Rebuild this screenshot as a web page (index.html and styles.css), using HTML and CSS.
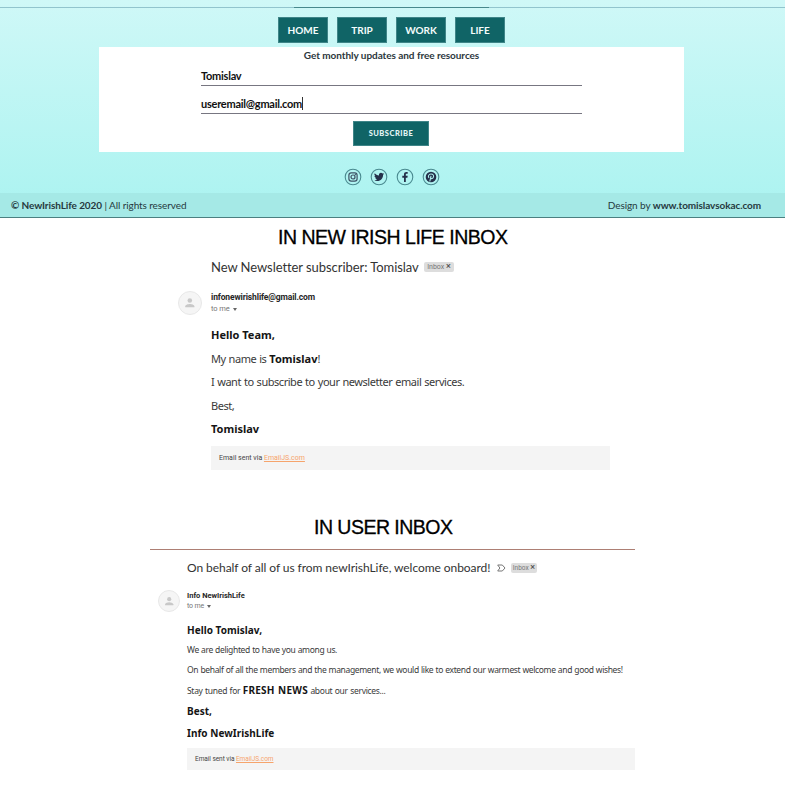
FILE: index.html
```
<!DOCTYPE html>
<html lang="en">
<head>
<meta charset="utf-8">
<title>NewIrishLife newsletter</title>
<link rel="stylesheet" href="styles.css">
</head>
<body>
<footer class="site">
  <div class="rule"><div class="rule-accent"></div></div>
  <nav class="nav"><a>HOME</a><a>TRIP</a><a>WORK</a><a>LIFE</a></nav>
  <form class="signup">
    <h2><span>Get monthly updates and free resources</span></h2>
    <div class="field"><span>Tomislav</span></div>
    <div class="field second"><span>useremail@gmail.com</span><i class="caret"></i></div>
    <button type="button">SUBSCRIBE</button>
  </form>
  <div class="social">
    <svg viewBox="0 0 18 18"><circle class="ring" cx="9" cy="9" r="7.8"/><rect class="line" x="4.9" y="4.9" width="8.2" height="8.2" rx="2.3"/><circle class="line" cx="9" cy="9" r="2"/><circle cx="11.3" cy="6.7" r=".6"/></svg>
    <svg viewBox="0 0 18 18"><circle class="ring" cx="9" cy="9" r="7.8"/><path transform="translate(4 3.9) scale(.42)" d="M23.95 4.57a10 10 0 0 1-2.82.77 4.96 4.96 0 0 0 2.16-2.72c-.95.55-2 .95-3.13 1.18a4.92 4.92 0 0 0-8.38 4.48C7.69 8.1 4.07 6.13 1.64 3.16a4.92 4.92 0 0 0 1.52 6.57 4.9 4.9 0 0 1-2.23-.61v.06a4.92 4.92 0 0 0 3.95 4.83 5 5 0 0 1-2.21.08 4.94 4.94 0 0 0 4.6 3.42A9.87 9.87 0 0 1 0 19.54a13.99 13.99 0 0 0 7.56 2.21c9.05 0 14-7.5 14-13.98v-.64a9.94 9.94 0 0 0 2.39-2.56z"/></svg>
    <svg viewBox="0 0 18 18"><circle class="ring" cx="9" cy="9" r="7.8"/><path d="M8 14V9.7H6.3V7.8H8V6.3C8 4.7 9 3.9 10.4 3.9l1.3.1v1.7h-.9c-.8 0-1 .4-1 1v1.1h1.9l-.3 1.9H9.8V14z"/></svg>
    <svg viewBox="0 0 18 18"><circle class="ring" cx="9" cy="9" r="7.8"/><circle cx="9" cy="9" r="5.3"/><path class="pin" d="M7 10c-1.3-1.7-.3-4 2-4 2.100 0 3 1.500 2.400 3.200-.5 1.600-2.200 1.800-2.600.8M9 7.800l-1.200 5.700"/></svg>
  </div>
  <div class="legal"><div class="left"><b>© NewIrishLife 2020</b> | All rights reserved</div><div class="right">Design by <b>www.tomislavsokac.com</b></div></div>
</footer>

<h1 class="heading team-heading">IN NEW IRISH LIFE INBOX</h1>
<section class="mail team">
  <div class="subject"><span class="title">New Newsletter subscriber: Tomislav</span><span class="tag">Inbox <b>×</b></span></div>
  <div class="sender">
    <div class="avatar"><svg viewBox="0 0 24 24"><circle cx="12" cy="8" r="4"/><path d="M4 20v-2c0-2.700 5.300-4 8-4s8 1.300 8 4v2z"/></svg></div>
    <div><div class="from">infonewirishlife@gmail.com</div><div class="to">to me <i></i></div></div>
  </div>
  <div class="body">
    <p class="strong hello">Hello Team,</p>
    <p class="name">My name is <b>Tomislav</b>!</p>
    <p class="want">I want to subscribe to your newsletter email services.</p>
    <p>Best,</p>
    <p class="strong">Tomislav</p>
  </div>
  <div class="via">Email sent via <u>EmailJS.com</u></div>
</section>

<h1 class="heading user-heading">IN USER INBOX</h1>
<section class="mail user">
  <div class="subject"><span class="title">On behalf of all of us from newIrishLife, welcome onboard!</span><svg class="marker" viewBox="0 0 9 8"><path d="M.7 1h4.600L8 4 5.300 7H.7l2.200-3z"/></svg><span class="tag">Inbox <b>×</b></span></div>
  <div class="sender">
    <div class="avatar"><svg viewBox="0 0 24 24"><circle cx="12" cy="8" r="4"/><path d="M4 20v-2c0-2.700 5.300-4 8-4s8 1.300 8 4v2z"/></svg></div>
    <div><div class="from">Info NewIrishLife</div><div class="to">to me <i></i></div></div>
  </div>
  <div class="body">
    <p class="strong hello">Hello Tomislav,</p>
    <p class="delight">We are delighted to have you among us.</p>
    <p class="behalf">On behalf of all the members and the management, we would like to extend our warmest welcome and good wishes!</p>
    <p class="stay">Stay tuned for <b>FRESH NEWS</b> about our services...</p>
    <p class="strong best">Best,</p>
    <p class="strong sign">Info NewIrishLife</p>
  </div>
  <div class="via">Email sent via <u>EmailJS.com</u></div>
</section>
</body>
</html>
```
FILE: styles.css
```
* { box-sizing: border-box; }
body { margin: 0; height: 785px; overflow: hidden; background: #fff; color: #222; font-family: "Noto Sans", sans-serif; }
h1, h2, p { margin: 0; }
div, p, h1, h2, span { white-space: nowrap; }

.site { height: 218px; padding-top: 7px; background: linear-gradient(#cff8f7, #aaf3f0); border-bottom: 1px solid #4b7f80; font-family: Lato, sans-serif; color: #263940; }
.rule { height: 1px; background: #91c4cd; }
.rule-accent { width: 195px; height: 1px; margin-left: 294px; background: #47888c; }
.nav { display: flex; gap: 9px; margin: 9px 0 0 278px; height: 26px; }
.nav a { width: 50px; border: 1px solid #3f8588; background: #106466; color: #f4fcfc; font-weight: 700; font-size: 10px; line-height: 24px; text-align: center; }
.signup { width: 585px; height: 105px; margin: 4px 0 0 99px; background: #fff; display: flex; flex-direction: column; align-items: center; }
.signup h2 { height: 18px; font-size: 10px; line-height: 17px; letter-spacing: -.05px; color: #2c373d; }
.field { width: 381px; height: 21px; border-bottom: 1px solid #777681; display: flex; align-items: center; font-weight: 700; font-size: 11px; letter-spacing: -.25px; color: #111; }
.second { height: 28px; padding-top: 8px; }
.caret { width: 1px; height: 13px; background: #333; }
.signup button { width: 76px; height: 25px; margin: 7px 1px 0 0; padding: 0; border: 1px solid #3f8588; background: #106466; color: #e5f6f6; font: 900 7.5px/22px Lato, sans-serif; letter-spacing: .5px; }
.social { display: flex; gap: 8px; margin: 16px 0 0 344px; height: 18px; }
.social svg { width: 18px; height: 18px; fill: #25304a; }
.social .ring { fill: none; stroke: #4a8a90; stroke-width: 1.1; }
.social .line { fill: none; stroke: #3d5265; stroke-width: 1.2; }
.social .pin { fill: none; stroke: #adeeed; stroke-width: 1.1; }
.legal { display: flex; justify-content: space-between; height: 24px; margin-top: 7px; padding: 0 24px 0 11px; background: #a5e9e6; font-size: 10px; line-height: 25px; letter-spacing: -.09px; }

.heading { font: 19.500px/24px "Liberation Sans", sans-serif; color: #000; -webkit-text-stroke: .3px #000; }
.team-heading { margin: 7px 0 0 278px; letter-spacing: -.48px; }
.user-heading { margin: 45px 0 0 314px; letter-spacing: -.52px; }

.subject { display: flex; align-items: center; height: 18px; color: #333; font-family: Lato, sans-serif; }
.tag { height: 10px; border-radius: 2px; background: #ddd; color: #777; font: 7px/10px Roboto, sans-serif; text-align: center; }
.tag b { color: #555; font-size: 9px; line-height: 8px; font-weight: 500; }
.sender { display: flex; }
.avatar { border: 1px solid #e8e8e8; border-radius: 50%; background: #f5f5f5; display: flex; align-items: center; justify-content: center; }
.avatar svg { width: 62%; fill: #c8c8c8; }
.from { font-family: Roboto, sans-serif; font-weight: 700; color: #262626; }
.to { font-family: Roboto, sans-serif; color: #777; display: flex; align-items: center; gap: 3px; }
.to i { border: 2.500px solid transparent; border-top: 3px solid #666; border-bottom: 0; }
.body { color: #3a3a3a; }
.strong, .body b { font-weight: 700; color: #151515; letter-spacing: 0; }
.via { background: #f4f4f4; color: #444; font-family: Roboto, sans-serif; }
.via u { color: #f6a46c; }

.team { width: 432px; margin: 9px 0 0 178px; }
.team .subject { margin-left: 33px; }
.team .title { width: 213px; font-size: 13px; letter-spacing: -.06px; }
.team .tag { width: 30px; }
.team .sender { margin-top: 15px; height: 26px; }
.team .avatar { width: 24px; height: 24px; margin: 0 9px 0 0; }
.team .from { font-size: 8.500px; line-height: 12px; letter-spacing: -.12px; }
.team .to { font-size: 7.500px; line-height: 12px; letter-spacing: -.1px; }
.team .body { margin: 6px 0 0 33px; font-size: 11px; line-height: 23.600px; }
.team .body p:not(.strong) { letter-spacing: -.46px; word-spacing: .55px; }
.team .via { margin: 5px 0 0 33px; height: 24px; padding-left: 8px; font-size: 7px; line-height: 25px; }

.user { width: 485px; margin: 10px 0 0 150px; border-top: 1px solid #ad7f74; }
.user .subject { margin: 9px 0 0 37px; }
.user .title { width: 310px; font-size: 12px; letter-spacing: -.06px; }
.user .marker { width: 9px; height: 8px; margin-right: 5px; fill: none; stroke: #777; }
.user .tag { width: 26px; font-size: 6.500px; }
.user .sender { margin: 13px 0 0 8px; height: 23px; }
.user .avatar { width: 22px; height: 22px; margin-right: 7px; }
.user .from { font-size: 7.500px; line-height: 11px; }
.user .to { font-size: 7px; line-height: 11px; letter-spacing: -.15px; }
.user .body { margin: 6px 0 0 37px; font-size: 8.500px; }
.user .body p { height: 20px; line-height: 20px; letter-spacing: -.35px; word-spacing: .35px; }
.user .body .stay { height: 20px; line-height: 21px; letter-spacing: -.3px; word-spacing: .5px; }
.user .body b { font-size: 10px; letter-spacing: .25px; }
.user .body .strong { font-size: 10px; letter-spacing: .03px; word-spacing: 0; }
.user .body .hello { height: 21px; line-height: 23px; }
.user .body .best { height: 22px; line-height: 22px; }
.user .body .sign { height: 22px; line-height: 22px; }
.user .via { margin: 4px 0 0 37px; height: 22px; padding-left: 8px; font-size: 6.500px; line-height: 22px; letter-spacing: -.05px; }
```
